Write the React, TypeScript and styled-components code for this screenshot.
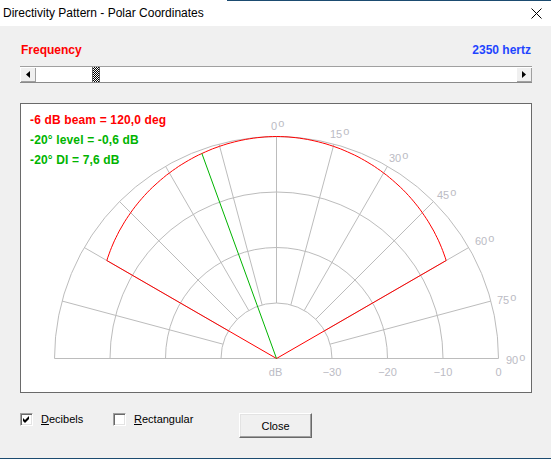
import React from 'react'
import styled, { createGlobalStyle } from 'styled-components'

const FONT = '"Liberation Sans", Arial, sans-serif'

const GlobalStyle = createGlobalStyle`
  html, body {
    margin: 0;
    padding: 0;
    background: #f0f0f0;
  }
  body {
    font-family: ${FONT};
  }
`

const Window = styled.div`
  width: 551px;
  height: 459px;
  display: flex;
  flex-direction: column;
  box-sizing: border-box;
  overflow: hidden;
  background: #f0f0f0;
  color: #000;
  font-family: ${FONT};
`

const TitleBar = styled.div`
  height: 26px;
  flex: none;
  display: flex;
  align-items: center;
  justify-content: space-between;
  padding: 0 9px 0 3px;
  background: linear-gradient(to right, transparent 227px, #1b4b70 227px) top left / 100% 1px no-repeat, #fff;
  font-size: 12px;
  line-height: 14px;
`

const Body = styled.div`
  flex: 1;
  display: flex;
  flex-direction: column;
  padding: 17px 19px 0 20px;
  border-bottom: 1px solid #1b4b70;
`

const HeaderRow = styled.div`
  display: flex;
  justify-content: space-between;
  font-size: 12px;
  line-height: 14px;
  font-weight: bold;
  padding: 0 1px;
`

const Caption = styled.span<{ $color: string }>`
  color: ${p => p.$color};
`

const ScrollBar = styled.div`
  margin-top: 9px;
  height: 17px;
  display: flex;
  box-sizing: border-box;
  border-top: 1px solid #a0a0a0;
  border-bottom: 1px solid #8a8a8a;
`

const ArrowButton = styled.div`
  width: 16px;
  flex: none;
  display: flex;
  align-items: center;
  justify-content: center;
  background: #f0f0f0;
  box-shadow: inset 1px 1px #fff, inset -1px -1px #a0a0a0;
`

const Track = styled.div`
  flex: 1;
  display: flex;
  background: #fff;
`

const Thumb = styled.div`
  width: 8px;
  flex: none;
  box-sizing: border-box;
  border-left: 1px solid #696969;
  border-right: 1px solid #696969;
  background: repeating-conic-gradient(#000 0 25%, #fff 0 50%) 0 0 / 2px 2px;
`

const PlotBox = styled.div`
  margin-top: 20px;
  height: 290px;
  box-sizing: border-box;
  border: 1px solid #6a6a6a;
  background: #fff;

  svg {
    display: block;
  }
`

const BottomRow = styled.div`
  margin-top: 20px;
  display: flex;
  align-items: flex-start;
`

const CheckItem = styled.label<{ $width: number }>`
  width: ${p => p.$width}px;
  display: flex;
  align-items: center;
  gap: 8px;
  height: 13px;
  font-size: 11px;
  line-height: 13px;
`

const CheckBox = styled.span`
  width: 13px;
  height: 13px;
  flex: none;
  box-sizing: border-box;
  display: flex;
  align-items: center;
  justify-content: center;
  background: #fff;
  border-top: 1px solid #a0a0a0;
  border-left: 1px solid #a0a0a0;
  border-right: 1px solid #fff;
  border-bottom: 1px solid #fff;
  box-shadow: inset 1px 1px #696969, inset -1px -1px #e3e3e3;
`

const Button = styled.button`
  width: 73px;
  height: 25px;
  box-sizing: border-box;
  padding: 0;
  font-family: ${FONT};
  font-size: 11px;
  color: #000;
  background: #f0f0f0;
  border-top: 1px solid #fff;
  border-left: 1px solid #fff;
  border-right: 1px solid #696969;
  border-bottom: 1px solid #696969;
  box-shadow: inset -1px -1px #a0a0a0, inset 1px 1px #e3e3e3;
`

// polar chart geometry (svg coordinates)
const O = { x: 255.5, y: 254.5 }
const R = 222
const rings = [1, 2, 3, 4].map(k => (R * k) / 4)
const pt = (deg: number, r: number): [number, number] => [
  O.x + r * Math.sin((deg * Math.PI) / 180),
  O.y - r * Math.cos((deg * Math.PI) / 180)
]
const levelDb = (deg: number) => -4.7 * Math.pow(Math.abs(deg) / 60, 1.75)
const radius = (db: number) => R + (db * R) / 40

const angleLabels = [
  { t: '0', x: 250, y: 26 },
  { t: '15', x: 309, y: 34 },
  { t: '30', x: 368, y: 58 },
  { t: '45', x: 416, y: 95 },
  { t: '60', x: 454, y: 141 },
  { t: '75', x: 476, y: 200 },
  { t: '90', x: 485, y: 260 }
]

const dbLabels = [
  { t: 'dB', x: O.x - 1 },
  { t: '\u221230', x: O.x + R / 4 },
  { t: '\u221220', x: O.x + R / 2 },
  { t: '\u221210', x: O.x + (3 * R) / 4 },
  { t: '0', x: O.x + R }
]

const PolarPlot: React.FC = () => {
  const curve: string[] = []
  for (let d = -60; d <= 60; d++) {
    const [x, y] = pt(d, radius(levelDb(d)))
    curve.push(`${x.toFixed(1)},${y.toFixed(1)}`)
  }
  const [gx, gy] = pt(-20, radius(levelDb(-20)))
  const grid = '#bcbcbc'
  const labelColor = '#bbbbc4'

  return (
    <svg width={510} height={288} fontFamily={FONT}>
      {rings.map(r => (
        <path
          key={r}
          d={`M ${O.x - r} ${O.y} A ${r} ${r} 0 0 1 ${O.x + r} ${O.y}`}
          fill="none"
          stroke={grid}
        />
      ))}
      <line x1={O.x - R} y1={O.y} x2={O.x + R} y2={O.y} stroke={grid} />
      {[-75, -60, -45, -30, -15, 0, 15, 30, 45, 60, 75].map(a => {
        const [x1, y1] = pt(a, R / 4)
        const [x2, y2] = pt(a, R)
        return <line key={a} x1={x1} y1={y1} x2={x2} y2={y2} stroke={grid} />
      })}
      {angleLabels.map(l => (
        <text key={l.t} x={l.x} y={l.y} fontSize={11} fill={labelColor}>
          {l.t}
          <tspan dx={1} dy={-3} fontSize={11}>o</tspan>
        </text>
      ))}
      {dbLabels.map(l => (
        <text key={l.t} x={l.x} y={272} fontSize={11} fill={labelColor} textAnchor="middle">
          {l.t}
        </text>
      ))}
      <polyline
        points={`${O.x},${O.y} ${curve.join(' ')} ${O.x},${O.y}`}
        fill="none"
        stroke="#ff0000"
      />
      <line x1={O.x} y1={O.y} x2={gx} y2={gy} stroke="#00b400" />
      <g fontSize={12} fontWeight="bold" letterSpacing={0.15}>
        <text x={9} y={20} fill="#ff0000">-6 dB beam = 120,0 deg</text>
        <text x={9} y={40} fill="#00b400">-20° level = -0,6 dB</text>
        <text x={9} y={60} fill="#00b400">-20° DI = 7,6 dB</text>
      </g>
    </svg>
  )
}

const App: React.FC = () => {
  const frequency = 2350
  const trackRange = 480 - 8
  const thumbOffset = Math.ceil((frequency / 20000) * trackRange)

  return (
    <>
      <GlobalStyle />
      <Window>
        <TitleBar>
          <span>Directivity Pattern - Polar Coordinates</span>
          <svg width={11} height={11}>
            <path d="M0.5 0.5 L10.5 10.5 M10.5 0.5 L0.5 10.5" stroke="#000" strokeWidth={1} />
          </svg>
        </TitleBar>
        <Body>
          <HeaderRow>
            <Caption $color="#ff0000">Frequency</Caption>
            <Caption $color="#1f45ff">{frequency} hertz</Caption>
          </HeaderRow>
          <ScrollBar>
            <ArrowButton>
              <svg width={4} height={7}>
                <polygon points="4,0 0,3.5 4,7" fill="#000" />
              </svg>
            </ArrowButton>
            <Track>
              <div style={{ width: thumbOffset, flex: 'none' }} />
              <Thumb />
            </Track>
            <ArrowButton>
              <svg width={4} height={7}>
                <polygon points="0,0 4,3.5 0,7" fill="#000" />
              </svg>
            </ArrowButton>
          </ScrollBar>
          <PlotBox>
            <PolarPlot />
          </PlotBox>
          <BottomRow>
            <CheckItem $width={93}>
              <CheckBox>
                <svg width={7} height={7}>
                  <path d="M0 2 L2 4 L6 0 L6 3 L2 7 L0 5 Z" fill="#000" />
                </svg>
              </CheckBox>
              <span>
                <u>D</u>ecibels
              </span>
            </CheckItem>
            <CheckItem $width={126}>
              <CheckBox />
              <span>
                <u>R</u>ectangular
              </span>
            </CheckItem>
            <Button>Close</Button>
          </BottomRow>
        </Body>
      </Window>
    </>
  )
}

export default App
